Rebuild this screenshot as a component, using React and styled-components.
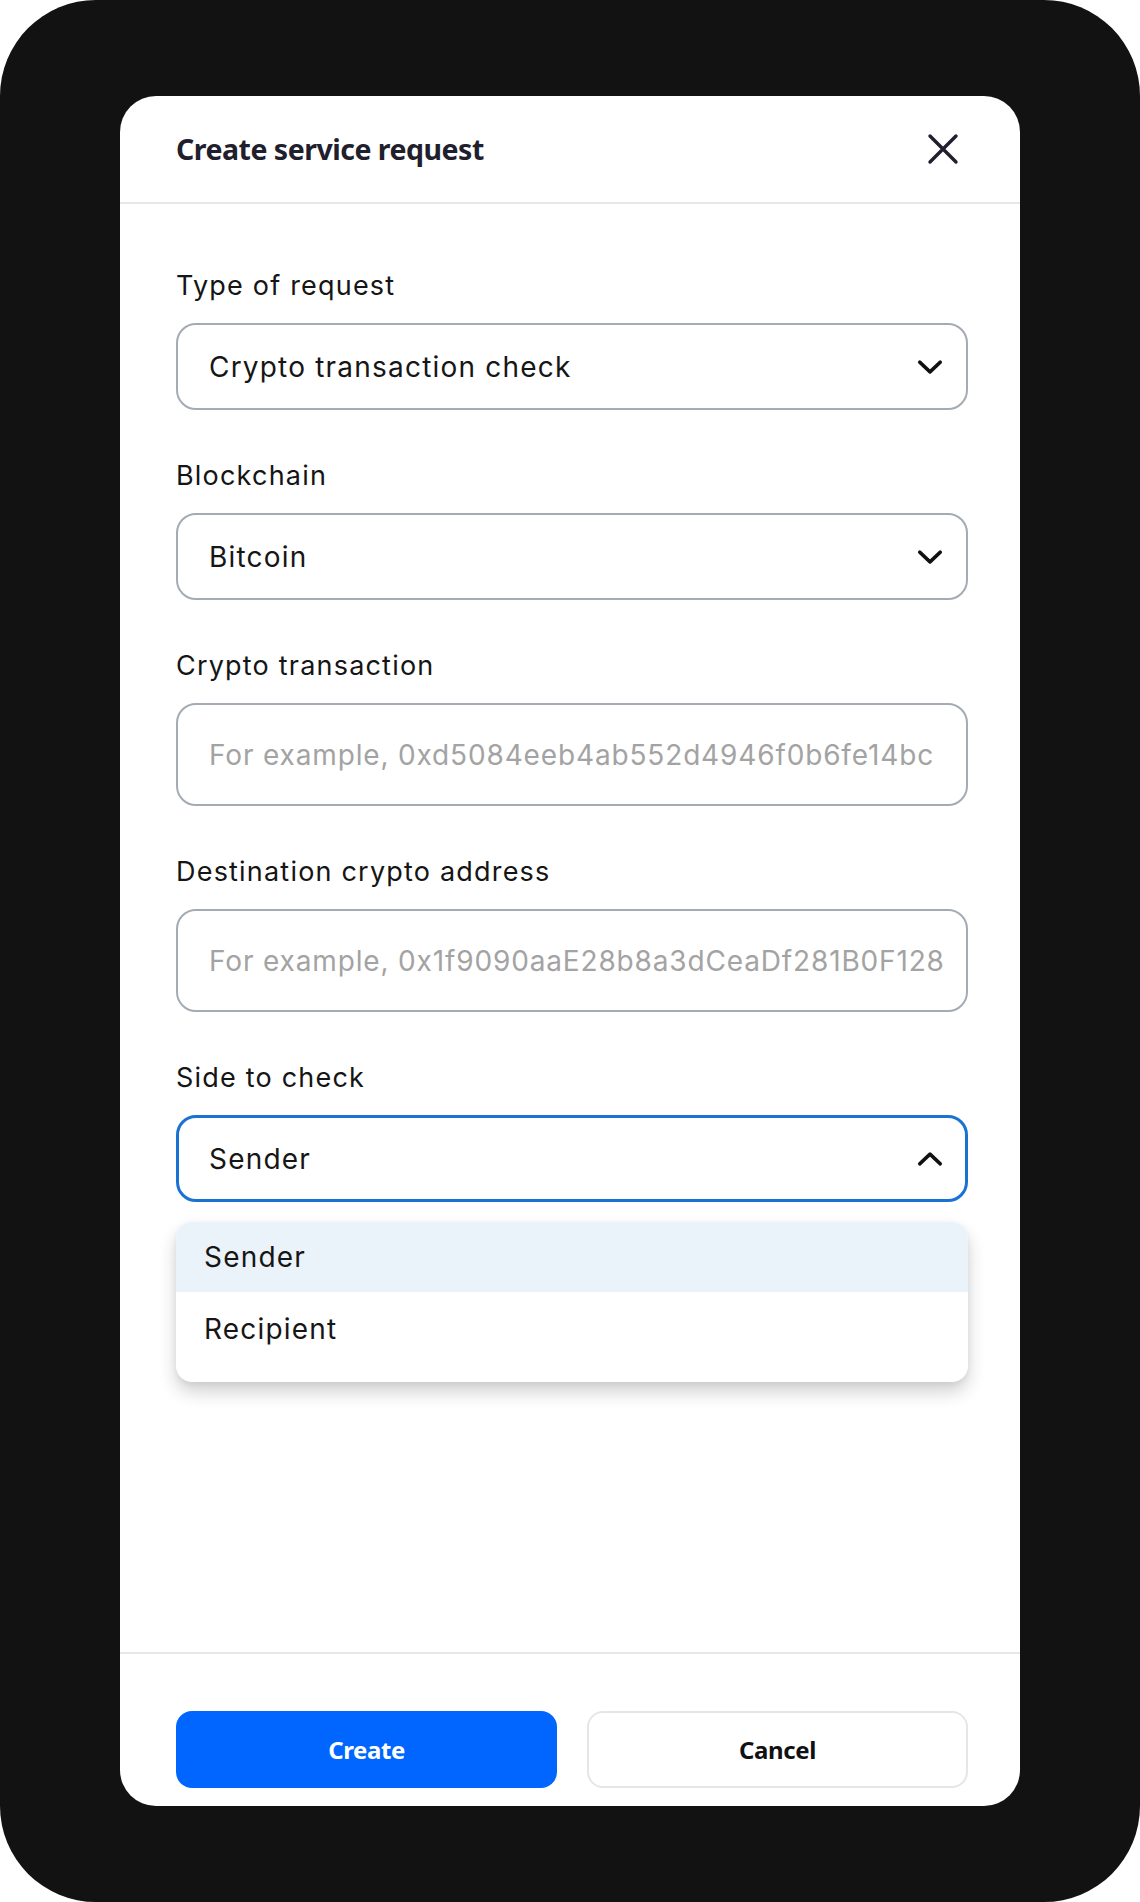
import styled, { createGlobalStyle } from 'styled-components';

const GlobalStyle = createGlobalStyle`
  html, body {
    margin: 0;
    padding: 0;
    background: #ffffff;
  }
  * {
    box-sizing: border-box;
  }
`;

const Frame = styled.div`
  width: 1140px;
  height: 1902px;
  background: #121212;
  border-radius: 96px;
  padding: 96px 120px 96px;
`;

const Card = styled.div`
  width: 900px;
  height: 1710px;
  background: #ffffff;
  border-radius: 36px;
  display: flex;
  flex-direction: column;
  overflow: hidden;
`;

const Header = styled.header`
  height: 108px;
  flex-shrink: 0;
  display: flex;
  align-items: center;
  justify-content: space-between;
  padding: 0 60px 0 56px;
  border-bottom: 2px solid #e6e7e9;
`;

const Title = styled.h1`
  margin: 0;
  font-family: "Noto Sans", sans-serif;
  font-weight: 700;
  font-size: 28.5px;
  letter-spacing: -0.5px;
  color: #1f1f2e;
`;

const CloseButton = styled.button`
  border: none;
  background: none;
  padding: 0;
  width: 34px;
  height: 34px;
  display: flex;
  align-items: center;
  justify-content: center;
  color: #1f1f2e;
  cursor: pointer;
`;

const Body = styled.main`
  flex: 1;
  padding: 66px 52px 0 56px;
  display: flex;
  flex-direction: column;
  gap: 50px;
`;

const Field = styled.div`
  display: flex;
  flex-direction: column;
  gap: 22px;
  position: relative;
`;

const Label = styled.label`
  font-family: Inter, sans-serif;
  font-size: 27px;
  line-height: 31px;
  color: #151515;
  letter-spacing: 1.2px;
`;

const Control = styled.div`
  height: ${(p) => (p.$tall ? '103px' : '87px')};
  border: ${(p) => (p.$active ? '3px solid #1a73d3' : '2px solid #a4abb4')};
  border-radius: 20px;
  display: flex;
  align-items: center;
  justify-content: space-between;
  padding: ${(p) => (p.$active ? '0 22px 0 30px' : '0 23px 0 31px')};
  font-family: Inter, sans-serif;
  font-size: 28px;
  letter-spacing: ${(p) => (p.$placeholder ? '0.85px' : '1.2px')};
  color: ${(p) => (p.$placeholder ? '#a3a3a3' : '#161616')};
  white-space: nowrap;
  overflow: hidden;
`;

const Menu = styled.ul`
  position: absolute;
  top: calc(100% + 20px);
  left: 0;
  right: 0;
  margin: 0;
  padding: 0 0 16px;
  list-style: none;
  background: #ffffff;
  border-radius: 16px;
  overflow: hidden;
  box-shadow: 0 10px 18px rgba(0, 0, 0, 0.18), 0 2px 6px rgba(0, 0, 0, 0.06);
`;

const MenuItem = styled.li`
  height: ${(p) => (p.$selected ? '70px' : '74px')};
  display: flex;
  align-items: center;
  padding-left: 28px;
  font-family: Inter, sans-serif;
  font-size: 28px;
  letter-spacing: 1.2px;
  color: #161616;
  background: ${(p) => (p.$selected ? '#ebf3fa' : '#ffffff')};
`;

const Footer = styled.footer`
  flex-shrink: 0;
  border-top: 2px solid #e6e7e9;
  padding: 57px 52px 18px 56px;
  display: grid;
  grid-template-columns: 1fr 1fr;
  gap: 30px;
`;

const Button = styled.button`
  height: 77px;
  border-radius: 16px;
  font-family: "Noto Sans", sans-serif;
  font-weight: 700;
  font-size: 24px;
  letter-spacing: -0.4px;
  cursor: pointer;
  background: ${(p) => (p.$primary ? '#0066ff' : '#ffffff')};
  color: ${(p) => (p.$primary ? '#ffffff' : '#111111')};
  border: ${(p) => (p.$primary ? 'none' : '2px solid #e6e6e6')};
`;

const Chevron = ({ up }) => (
  <svg width="26" height="26" viewBox="0 0 24 24" fill="none" stroke="#111" strokeWidth="3.2" strokeLinecap="round" strokeLinejoin="round">
    {up ? <path d="M2.5 16.5l9.5-9 9.5 9" /> : <path d="M2.5 7.5l9.5 9 9.5-9" />}
  </svg>
);

const fields = [
  { label: 'Type of request', value: 'Crypto transaction check', select: true },
  { label: 'Blockchain', value: 'Bitcoin', select: true },
  { label: 'Crypto transaction', value: 'For example, 0xd5084eeb4ab552d4946f0b6fe14bc', placeholder: true },
  { label: 'Destination crypto address', value: 'For example, 0x1f9090aaE28b8a3dCeaDf281B0F128', placeholder: true },
];

const App = () => {
  return (
    <>
      <GlobalStyle />
      <Frame>
        <Card>
          <Header>
            <Title>Create service request</Title>
            <CloseButton aria-label="Close">
              <svg width="32" height="32" viewBox="0 0 32 32" fill="none" stroke="currentColor" strokeWidth="3.4" strokeLinecap="round">
                <path d="M3 3l26 26M29 3L3 29" />
              </svg>
            </CloseButton>
          </Header>

          <Body>
            {fields.map((f) => (
              <Field key={f.label}>
                <Label>{f.label}</Label>
                <Control $tall={f.placeholder} $placeholder={f.placeholder}>
                  <span>{f.value}</span>
                  {f.select && <Chevron />}
                </Control>
              </Field>
            ))}

            <Field>
              <Label>Side to check</Label>
              <Control $active>
                <span>Sender</span>
                <Chevron up />
              </Control>
              <Menu>
                <MenuItem $selected>Sender</MenuItem>
                <MenuItem>Recipient</MenuItem>
              </Menu>
            </Field>
          </Body>

          <Footer>
            <Button $primary>Create</Button>
            <Button>Cancel</Button>
          </Footer>
        </Card>
      </Frame>
    </>
  );
};

export default App;
